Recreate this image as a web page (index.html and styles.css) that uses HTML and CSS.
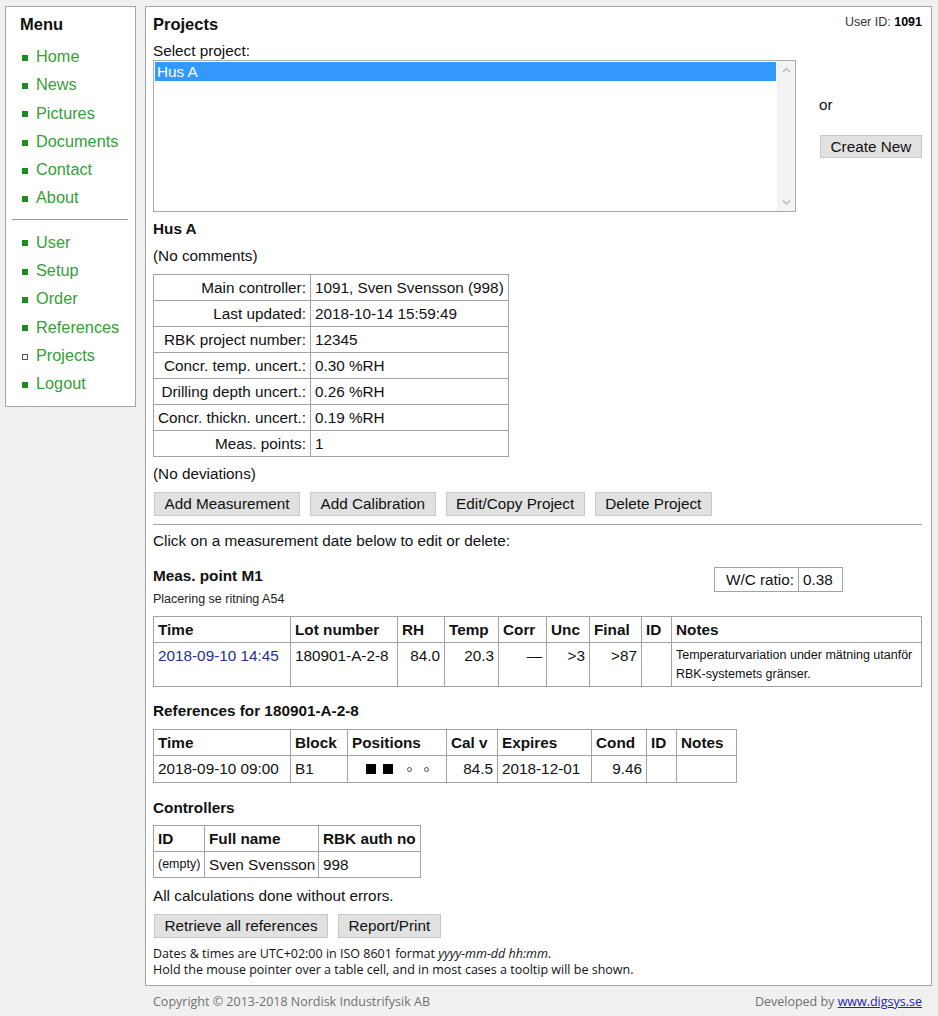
FILE: index.html
```html
<!DOCTYPE html>
<html lang="en">
<head>
<meta charset="utf-8">
<title>Projects</title>
<link rel="stylesheet" href="styles.css">
</head>
<body>
<div class="page">
  <nav class="menu">
    <div class="menu-title">Menu</div>
    <ul class="menu-list">
      <li><span class="bullet"></span><a class="menu-link">Home</a></li>
      <li><span class="bullet"></span><a class="menu-link">News</a></li>
      <li><span class="bullet"></span><a class="menu-link">Pictures</a></li>
      <li><span class="bullet"></span><a class="menu-link">Documents</a></li>
      <li><span class="bullet"></span><a class="menu-link">Contact</a></li>
      <li><span class="bullet"></span><a class="menu-link">About</a></li>
    </ul>
    <hr class="menu-sep">
    <ul class="menu-list">
      <li><span class="bullet"></span><a class="menu-link">User</a></li>
      <li><span class="bullet"></span><a class="menu-link">Setup</a></li>
      <li><span class="bullet"></span><a class="menu-link">Order</a></li>
      <li><span class="bullet"></span><a class="menu-link">References</a></li>
      <li><span class="bullet bullet-current"></span><a class="menu-link">Projects</a></li>
      <li><span class="bullet"></span><a class="menu-link">Logout</a></li>
    </ul>
  </nav>

  <div class="col">
    <main class="main">
      <div class="head-row">
        <h1 class="title">Projects</h1>
        <div class="userid">User ID: <b class="userid-num">1091</b></div>
      </div>

      <div class="select-row">
        <div class="select-col">
          <div class="label">Select project:</div>
          <div class="listbox">
            <div class="options">
              <div class="option option-selected">Hus A</div>
            </div>
            <div class="scrollbar">
              <svg class="chev" width="9" height="8" viewBox="0 0 9 8"><polyline points="1,6 4.5,2.5 8,6" fill="none" stroke="#b3b3b3" stroke-width="1.2"/></svg>
              <svg class="chev" width="9" height="8" viewBox="0 0 9 8"><polyline points="1,2.5 4.5,6 8,2.5" fill="none" stroke="#b3b3b3" stroke-width="1.2"/></svg>
            </div>
          </div>
        </div>
        <div class="create-col">
          <div class="or">or</div>
          <button class="btn btn-create">Create New</button>
        </div>
      </div>

      <h2 class="sub sub-first">Hus A</h2>
      <p class="para">(No comments)</p>

      <table class="tbl info">
        <tr><th class="lbl">Main controller:</th><td>1091, Sven Svensson (998)</td></tr>
        <tr><th class="lbl">Last updated:</th><td>2018-10-14 15:59:49</td></tr>
        <tr><th class="lbl">RBK project number:</th><td>12345</td></tr>
        <tr><th class="lbl">Concr. temp. uncert.:</th><td>0.30 %RH</td></tr>
        <tr><th class="lbl">Drilling depth uncert.:</th><td>0.26 %RH</td></tr>
        <tr><th class="lbl">Concr. thickn. uncert.:</th><td>0.19 %RH</td></tr>
        <tr><th class="lbl">Meas. points:</th><td>1</td></tr>
      </table>

      <p class="para para-dev">(No deviations)</p>

      <div class="btn-row">
        <button class="btn">Add Measurement</button>
        <button class="btn">Add Calibration</button>
        <button class="btn">Edit/Copy Project</button>
        <button class="btn">Delete Project</button>
      </div>

      <hr class="sep">

      <p class="para para-click">Click on a measurement date below to edit or delete:</p>

      <div class="mp-row">
        <h2 class="sub sub-inline">Meas. point M1</h2>
        <table class="tbl wc">
          <tr><th class="wc-lbl">W/C ratio:</th><td class="wc-val">0.38</td></tr>
        </table>
      </div>
      <p class="small">Placering se ritning A54</p>

      <table class="tbl grid meas">
        <colgroup>
          <col class="w137"><col class="w107"><col class="w47"><col class="w54"><col class="w48"><col class="w43"><col class="w52"><col class="w30"><col>
        </colgroup>
        <tr><th>Time</th><th>Lot number</th><th>RH</th><th>Temp</th><th>Corr</th><th>Unc</th><th>Final</th><th>ID</th><th>Notes</th></tr>
        <tr class="meas-row">
          <td><a class="date-link">2018-09-10 14:45</a></td>
          <td>180901-A-2-8</td>
          <td class="num">84.0</td>
          <td class="num">20.3</td>
          <td class="num">—</td>
          <td class="num">&gt;3</td>
          <td class="num">&gt;87</td>
          <td></td>
          <td class="note">Temperaturvariation under mätning utanför RBK-systemets gränser.</td>
        </tr>
      </table>

      <h2 class="sub sub-15">References for 180901-A-2-8</h2>
      <table class="tbl grid refs">
        <colgroup>
          <col class="w137"><col class="w57"><col class="w99"><col class="w51"><col class="w94"><col class="w55"><col class="w30"><col class="w60">
        </colgroup>
        <tr><th>Time</th><th>Block</th><th>Positions</th><th>Cal v</th><th>Expires</th><th>Cond</th><th>ID</th><th>Notes</th></tr>
        <tr class="refs-row">
          <td>2018-09-10 09:00</td>
          <td>B1</td>
          <td class="pos"><span class="pos-set"><span class="sq"></span><span class="sq"></span><span class="ci"></span><span class="ci"></span></span></td>
          <td class="num">84.5</td>
          <td>2018-12-01</td>
          <td class="num">9.46</td>
          <td></td>
          <td></td>
        </tr>
      </table>

      <h2 class="sub sub-ctrl">Controllers</h2>
      <table class="tbl grid ctrl">
        <colgroup><col class="w51"><col class="w114"><col class="w102"></colgroup>
        <tr><th>ID</th><th>Full name</th><th>RBK auth no</th></tr>
        <tr><td class="empty">(empty)</td><td>Sven Svensson</td><td>998</td></tr>
      </table>

      <p class="para">All calculations done without errors.</p>

      <div class="btn-row">
        <button class="btn">Retrieve all references</button>
        <button class="btn">Report/Print</button>
      </div>

      <div class="notes">
        <div>Dates &amp; times are UTC+02:00 in ISO 8601 format <i>yyyy-mm-dd hh:mm</i>.</div>
        <div>Hold the mouse pointer over a table cell, and in most cases a tooltip will be shown.</div>
      </div>
    </main>

    <footer class="footer">
      <span>Copyright © 2013-2018 Nordisk Industrifysik AB</span>
      <span>Developed by <a class="foot-link">www.digsys.se</a></span>
    </footer>
  </div>
</div>
</body>
</html>
```

FILE: styles.css
```css
* { box-sizing: border-box; }

html, body {
  margin: 0;
  padding: 0;
  background: #f0f0f0;
}

body {
  font-family: "Liberation Sans", Arial, sans-serif;
  font-size: 15.3px;
  color: #111;
}

.page {
  display: flex;
  align-items: flex-start;
  gap: 9px;
  padding: 6px 6px 0 5px;
}

/* ---------- Menu ---------- */
.menu {
  width: 131px;
  flex: none;
  background: #fff;
  border: 1px solid #a6a6a6;
  padding: 7px 0 8px 0;
}

.menu-title {
  font-weight: bold;
  font-size: 16.5px;
  line-height: 20px;
  padding-left: 14px;
}

.menu-list {
  list-style: none;
  margin: 8px 0 0 0;
  padding: 0 0 0 16px;
}

.menu-list li {
  line-height: 28.3px;
  height: 28.3px;
  font-size: 16.3px;
  display: flex;
  align-items: center;
}

.bullet {
  width: 6px;
  height: 6px;
  background: #1e8c1e;
  margin-right: 8px;
  margin-top: 3px;
  flex: none;
}

.bullet-current {
  background: #fff;
  border: 1px solid #555;
}

.menu-link {
  color: #35a035;
  text-decoration: none;
}

.menu-sep {
  border: 0;
  border-top: 1px solid #9a9a9a;
  height: 0;
  margin: 7px 7px 0 6px;
}

/* ---------- Main ---------- */
.col {
  flex: 1;
  min-width: 0;
}

.main {
  background: #fff;
  border: 1px solid #a6a6a6;
  padding: 7px 9px 7px 7px;
}

.head-row {
  display: flex;
  justify-content: space-between;
  align-items: flex-start;
}

.title {
  margin: 0;
  font-size: 16.5px;
  line-height: 20px;
  font-weight: bold;
}

.userid {
  font-size: 12.5px;
  line-height: 16px;
  color: #333;
}

.userid-num {
  color: #000;
}

.select-row {
  display: flex;
  align-items: flex-start;
  margin-top: 8px;
}

.select-col {
  width: 643px;
  flex: none;
}

.label {
  line-height: 18px;
}

.listbox {
  height: 152px;
  border: 1px solid #a9a9a9;
  display: flex;
}

.options {
  flex: 1;
  padding: 1px;
}

.option {
  height: 19px;
  line-height: 19px;
  padding-left: 2px;
}

.option-selected {
  background: #3399ff;
  color: #fff;
}

.scrollbar {
  width: 18px;
  flex: none;
  background: #f3f3f3;
  border-left: 1px solid #f0f0f0;
  display: flex;
  flex-direction: column;
  justify-content: space-between;
  align-items: center;
  padding: 5px 0 5px;
}

.chev {
  display: block;
}

.create-col {
  margin-left: 23px;
  padding-top: 54px;
  display: flex;
  flex-direction: column;
  align-items: flex-start;
}

.or {
  line-height: 18px;
}

.btn {
  font-family: "Liberation Sans", Arial, sans-serif;
  font-size: 15.3px;
  color: #111;
  background: #e1e1e1;
  border: 1px solid #c9c9c9;
  height: 24px;
  padding: 0 9.5px;
  line-height: 22px;
  margin: 0;
  border-radius: 0;
}

.btn-create {
  margin-top: 21px;
  margin-left: 1px;
  padding: 0 9.5px;
  height: 23px;
}

.sub {
  margin: 16px 0 0 0;
  font-size: 15.3px;
  line-height: 18px;
  font-weight: bold;
}

.sub-first {
  margin-top: 8px;
}

.sub-15 {
  margin-top: 15px;
}

.sub-ctrl {
  margin-top: 16px;
  margin-bottom: -1px;
}

.sub-inline {
  margin: 0;
}

.para {
  margin: 9px 0 0 0;
  line-height: 18px;
}

.para-dev {
  margin-top: 8px;
}

.para-click {
  margin-top: 7px;
}

/* ---------- Tables ---------- */
.tbl {
  border-collapse: collapse;
  margin-top: 9px;
}

.tbl th,
.tbl td {
  border: 1px solid #a3a3a3;
  padding: 4px 4px;
  line-height: 17px;
  vertical-align: top;
  white-space: nowrap;
}

.info th.lbl {
  font-weight: normal;
  text-align: right;
}

.btn-row {
  display: flex;
  gap: 10px;
  margin-top: 9px;
  padding-left: 1px;
}

.sep {
  border: 0;
  border-top: 1px solid #a0a0a0;
  height: 0;
  margin: 8px 0 0 0;
}

.mp-row {
  display: flex;
  justify-content: space-between;
  align-items: flex-start;
  margin-top: 17px;
}

.wc {
  margin: 0 79px 0 0;
}

.wc th,
.wc td {
  padding: 3px 4px;
}

.wc-lbl {
  font-weight: normal;
  text-align: right;
  width: 84px;
}

.wc-val {
  width: 44px;
}

.small {
  margin: -1px 0 0 0;
  font-size: 12.5px;
  line-height: 16px;
  color: #222;
}

.grid {
  table-layout: fixed;
}

.grid th {
  text-align: left;
  font-weight: bold;
}

.meas {
  width: 100%;
}

.refs {
  width: 584px;
}

.ctrl {
  width: 268px;
}

.w30 { width: 30px; }
.w43 { width: 43px; }
.w47 { width: 47px; }
.w48 { width: 48px; }
.w51 { width: 51px; }
.w52 { width: 52px; }
.w54 { width: 54px; }
.w55 { width: 55px; }
.w57 { width: 57px; }
.w60 { width: 60px; }
.w94 { width: 94px; }
.w99 { width: 99px; }
.w102 { width: 102px; }
.w107 { width: 107px; }
.w114 { width: 114px; }
.w137 { width: 137px; }

.num {
  text-align: right;
}

.date-link {
  color: #252f8f;
  text-decoration: none;
}

.tbl td.note {
  font-size: 12.5px;
  line-height: 19px;
  padding: 3px 4px 2px;
  white-space: normal;
}

.refs-row td {
  padding-bottom: 5px;
}

.pos {
  text-align: center;
}

.pos-set {
  display: inline-flex;
  align-items: center;
  vertical-align: top;
  height: 17px;
}

.sq {
  display: block;
  width: 10px;
  height: 10px;
  background: #000;
  margin-right: 7px;
}

.sq + .sq {
  margin-right: 14px;
}

.ci {
  display: block;
  width: 5px;
  height: 5px;
  border: 1px solid #555;
  border-radius: 50%;
  margin-top: 2px;
}

.ci + .ci {
  margin-left: 12px;
}

.tbl td.empty {
  font-size: 12.5px;
}

.notes {
  margin-top: 8px;
  font-family: "Open Sans", "Noto Sans", sans-serif;
  font-size: 12.5px;
  line-height: 16px;
  color: #111;
}

/* ---------- Footer ---------- */
.footer {
  display: flex;
  justify-content: space-between;
  margin-top: 8px;
  padding: 0 10px 0 8px;
  font-family: "Open Sans", "Noto Sans", sans-serif;
  font-size: 12.5px;
  line-height: 16px;
  color: #707070;
}

.foot-link {
  color: #2323b0;
  text-decoration: underline;
}
```
